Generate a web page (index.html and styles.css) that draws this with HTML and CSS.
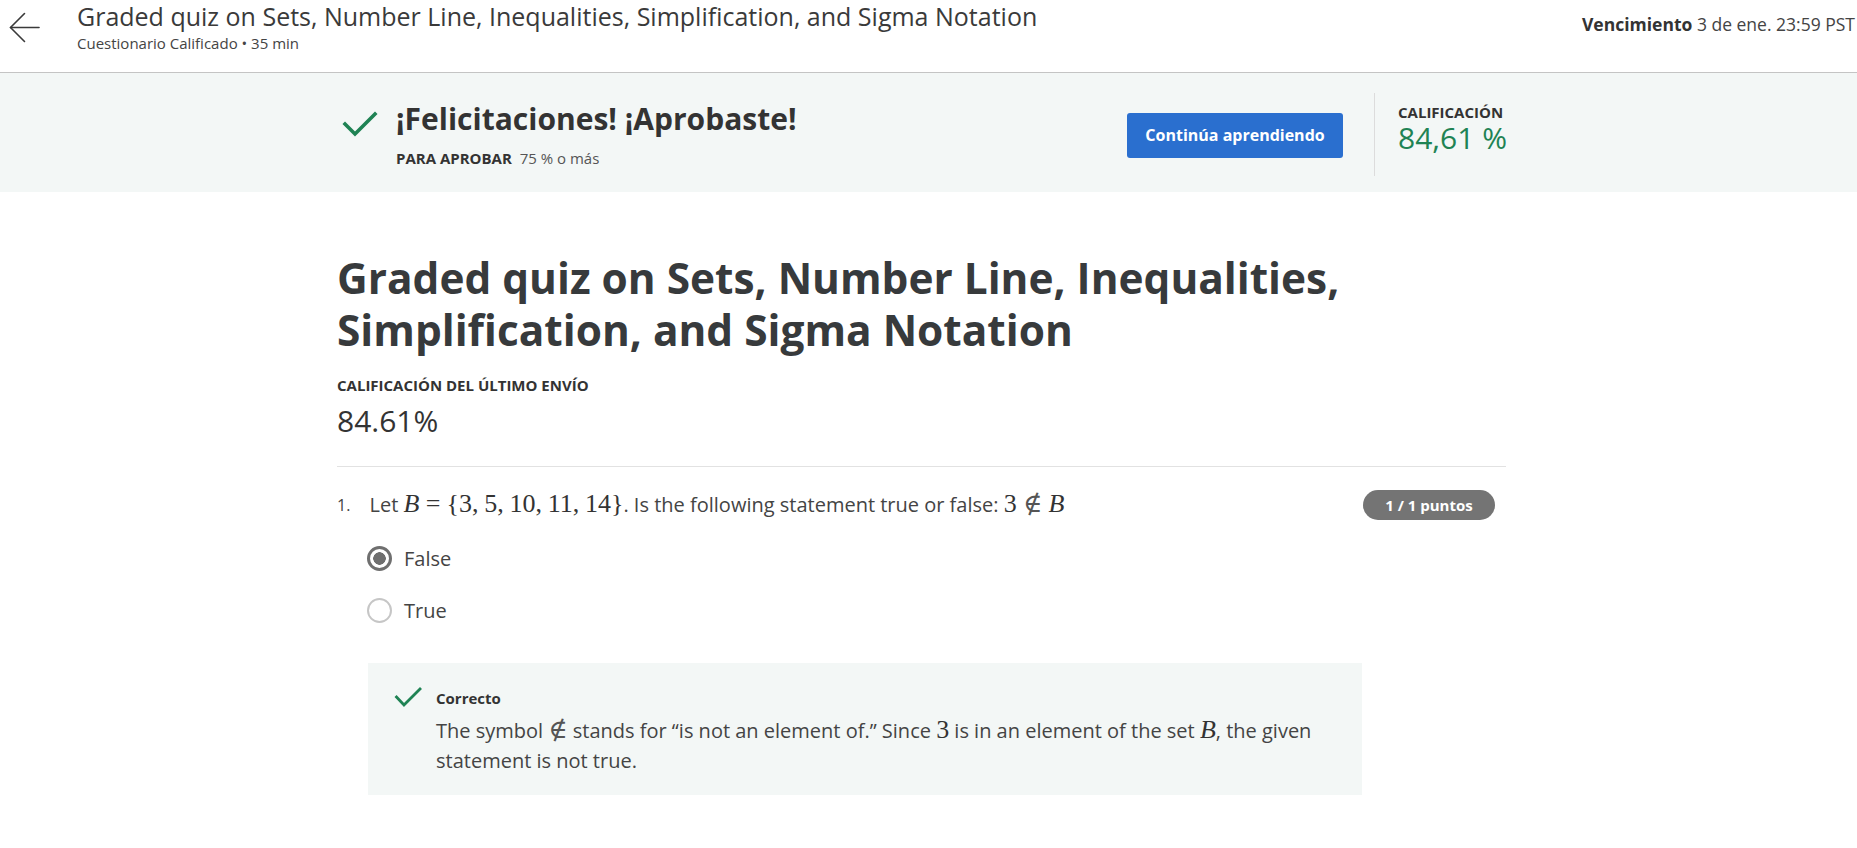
FILE: index.html
```html
<!DOCTYPE html>
<html lang="es">
<head>
<meta charset="utf-8">
<title>Graded quiz</title>
<link rel="stylesheet" href="styles.css">
</head>
<body>
<header class="topbar">
  <button class="back" aria-label="Volver">
    <svg width="31" height="31" viewBox="0 0 31 31" fill="none" stroke="#3a3a3a" stroke-width="1.6" stroke-linecap="round" stroke-linejoin="round">
      <path d="M30 15.5H1.5"/>
      <path d="M15.5 1.5L1.5 15.5L15.5 29.5"/>
    </svg>
  </button>
  <div class="topbar-titles">
    <div class="topbar-title">Graded quiz on Sets, Number Line, Inequalities, Simplification, and Sigma Notation</div>
    <div class="topbar-sub">Cuestionario Calificado • 35 min</div>
  </div>
  <div class="due"><b>Vencimiento</b> 3 de ene. 23:59 PST</div>
</header>

<section class="banner">
  <div class="container banner-inner">
    <div class="pass">
      <svg class="pass-check" width="36" height="27" viewBox="0 0 36 27" fill="none" stroke="#1f8354" stroke-width="3.6" stroke-linecap="square">
        <path d="M3 13L13 23L33 3"/>
      </svg>
      <div class="pass-text">
        <h2 class="pass-title">¡Felicitaciones! ¡Aprobaste!</h2>
        <div class="pass-req"><b>PARA APROBAR</b>&nbsp; 75 % o más</div>
      </div>
    </div>
    <button class="btn-primary">Continúa aprendiendo</button>
    <div class="vdivider"></div>
    <div class="grade">
      <div class="grade-label">CALIFICACIÓN</div>
      <div class="grade-value">84,61 %</div>
    </div>
  </div>
</section>

<main class="container main">
  <h1 class="quiz-title">Graded quiz on Sets, Number Line, Inequalities, Simplification, and Sigma Notation</h1>
  <div class="last-label">CALIFICACIÓN DEL ÚLTIMO ENVÍO</div>
  <div class="last-value">84.61%</div>
  <hr class="sep">

  <div class="question">
    <span class="q-num">1.</span>
    <div class="q-text">Let <span class="math"><i>B</i><span class="rel">=</span>{3,<span class="thin"></span>5,<span class="thin"></span>10,<span class="thin"></span>11,<span class="thin"></span>14}</span>. Is the following statement true or false: <span class="math">3<span class="rel notin">∉</span><i>B</i></span></div>
    <span class="points">1 / 1 puntos</span>
  </div>

  <div class="options">
    <label class="option"><span class="radio radio-on"></span>False</label>
    <label class="option"><span class="radio"></span>True</label>
  </div>

  <div class="feedback">
    <svg class="fb-check" width="28" height="21" viewBox="0 0 28 21" fill="none" stroke="#1f8354" stroke-width="2.8" stroke-linecap="square">
      <path d="M2.5 10L10 18L26 2"/>
    </svg>
    <div class="fb-body">
      <div class="fb-title">Correcto</div>
      <p class="fb-text">The symbol <span class="math notin">∉</span> stands for “is not an element of.” Since <span class="math">3</span> is in an element of the set <span class="math"><i>B</i></span>, the given statement is not true.</p>
    </div>
  </div>
</main>
</body>
</html>
```

FILE: styles.css
```css
* { box-sizing: border-box; }

body {
  margin: 0;
  font-family: "Open Sans", "Liberation Sans", sans-serif;
  color: #373a3c;
  background: #fff;
}

.topbar {
  display: flex;
  align-items: flex-start;
  height: 73px;
  border-bottom: 1px solid #c4c4c4;
}

.back {
  margin: 12px 0 0 9px;
  padding: 0;
  width: 31px;
  height: 31px;
  border: none;
  background: none;
  display: flex;
}

.topbar-titles {
  margin: 1px 0 0 37px;
  flex: 1;
}

.topbar-title {
  font-size: 25px;
  line-height: 30px;
  color: #3a3a3a;
}

.topbar-sub {
  margin-top: 2px;
  font-size: 15px;
  line-height: 20px;
  color: #444;
}

.due {
  margin-top: 12px;
  padding-right: 2px;
  font-size: 17.5px;
  line-height: 24px;
  color: #444;
  white-space: nowrap;
}

.due b { color: #333; font-weight: 700; }

.container {
  max-width: 1183px;
  margin: 0 auto;
  padding-right: 14px;
}

.banner {
  background: #f3f7f6;
  height: 119px;
}

.banner-inner {
  display: flex;
  align-items: center;
  height: 100%;
}

.pass {
  flex: 1;
  display: flex;
  align-items: flex-start;
  align-self: flex-start;
  margin-top: 26px;
}

.pass-check {
  margin: 12px 0 0 5px;
  flex-shrink: 0;
}

.pass-text { margin-left: 18px; }

.pass-title {
  margin: 0;
  font-size: 30px;
  line-height: 40px;
  font-weight: 700;
  color: #333;
}

.pass-req {
  margin-top: 9px;
  font-size: 15px;
  line-height: 20px;
  color: #555;
}

.pass-req b { color: #333; }

.btn-primary {
  width: 216px;
  height: 45px;
  margin-top: 5px;
  border: none;
  border-radius: 3px;
  background: #2a6fcf;
  color: #fff;
  font-family: inherit;
  font-size: 16px;
  font-weight: 700;
}

.vdivider {
  width: 1px;
  height: 83px;
  margin: 4px 23px 0 31px;
  background: #dcdcdc;
}

.grade {
  align-self: flex-start;
  margin-top: 29px;
  width: 108px;
  white-space: nowrap;
}

.grade-label {
  font-size: 15px;
  line-height: 20px;
  font-weight: 700;
  color: #333;
}

.grade-value {
  margin-top: -2px;
  font-size: 30px;
  line-height: 36px;
  color: #1f8354;
}

.main { padding-top: 60px; }

.quiz-title {
  margin: 0;
  font-size: 42.4px;
  line-height: 52px;
  font-weight: 700;
  color: #373a3c;
}

.last-label {
  margin-top: 19px;
  font-size: 15px;
  line-height: 20px;
  font-weight: 700;
  color: #333;
}

.last-value {
  margin-top: 6px;
  font-size: 30px;
  line-height: 40px;
  color: #333;
}

.sep {
  margin: 25px 0 0;
  border: none;
  border-top: 1px solid #e2e2e2;
}

.question {
  display: flex;
  align-items: center;
  margin-top: 23px;
  padding-right: 11px;
}

.q-num {
  width: 32.5px;
  font-size: 16px;
  color: #444;
}

.q-text {
  flex: 1;
  font-size: 20px;
  line-height: 30px;
  color: #444;
}

.math {
  font-family: "Liberation Serif", "DejaVu Serif", serif;
  font-size: 1.3em;
  line-height: 1;
  color: #333;
}

.math i { font-style: italic; }

.rel { margin: 0 0.24em; }

.notin {
  font-family: "DejaVu Sans", "DejaVu Serif", serif;
  font-weight: 200;
  color: #555;
}

.thin { margin-right: 0.22em; }

.points {
  height: 30px;
  width: 132px;
  border-radius: 15px;
  background: #747474;
  color: #fff;
  font-size: 15px;
  font-weight: 700;
  line-height: 30px;
  text-align: center;
}

.options {
  margin: 18px 0 0 30px;
  display: flex;
  flex-direction: column;
  gap: 12px;
}

.option {
  display: flex;
  align-items: center;
  height: 40px;
  font-size: 20px;
  color: #444;
}

.radio {
  width: 25px;
  height: 25px;
  margin-right: 12px;
  border-radius: 50%;
  border: 2px solid #c6c6c6;
  background: #fff;
}

.radio-on {
  border: 3px solid #6f6f6f;
  background: radial-gradient(circle, #6f6f6f 0 6px, #fff 6.5px);
}

.feedback {
  display: flex;
  align-items: flex-start;
  width: 994px;
  margin: 33px 0 0 31px;
  padding: 24px 26px 19px 26px;
  background: #f3f7f6;
}

.fb-check { flex-shrink: 0; margin-right: 14px; }

.fb-body { flex: 1; }

.fb-title {
  margin-top: 1px;
  font-size: 15px;
  line-height: 20px;
  font-weight: 700;
  color: #333;
}

.fb-text {
  margin: 8px 0 0;
  font-size: 20px;
  line-height: 30px;
  color: #444;
}
```
